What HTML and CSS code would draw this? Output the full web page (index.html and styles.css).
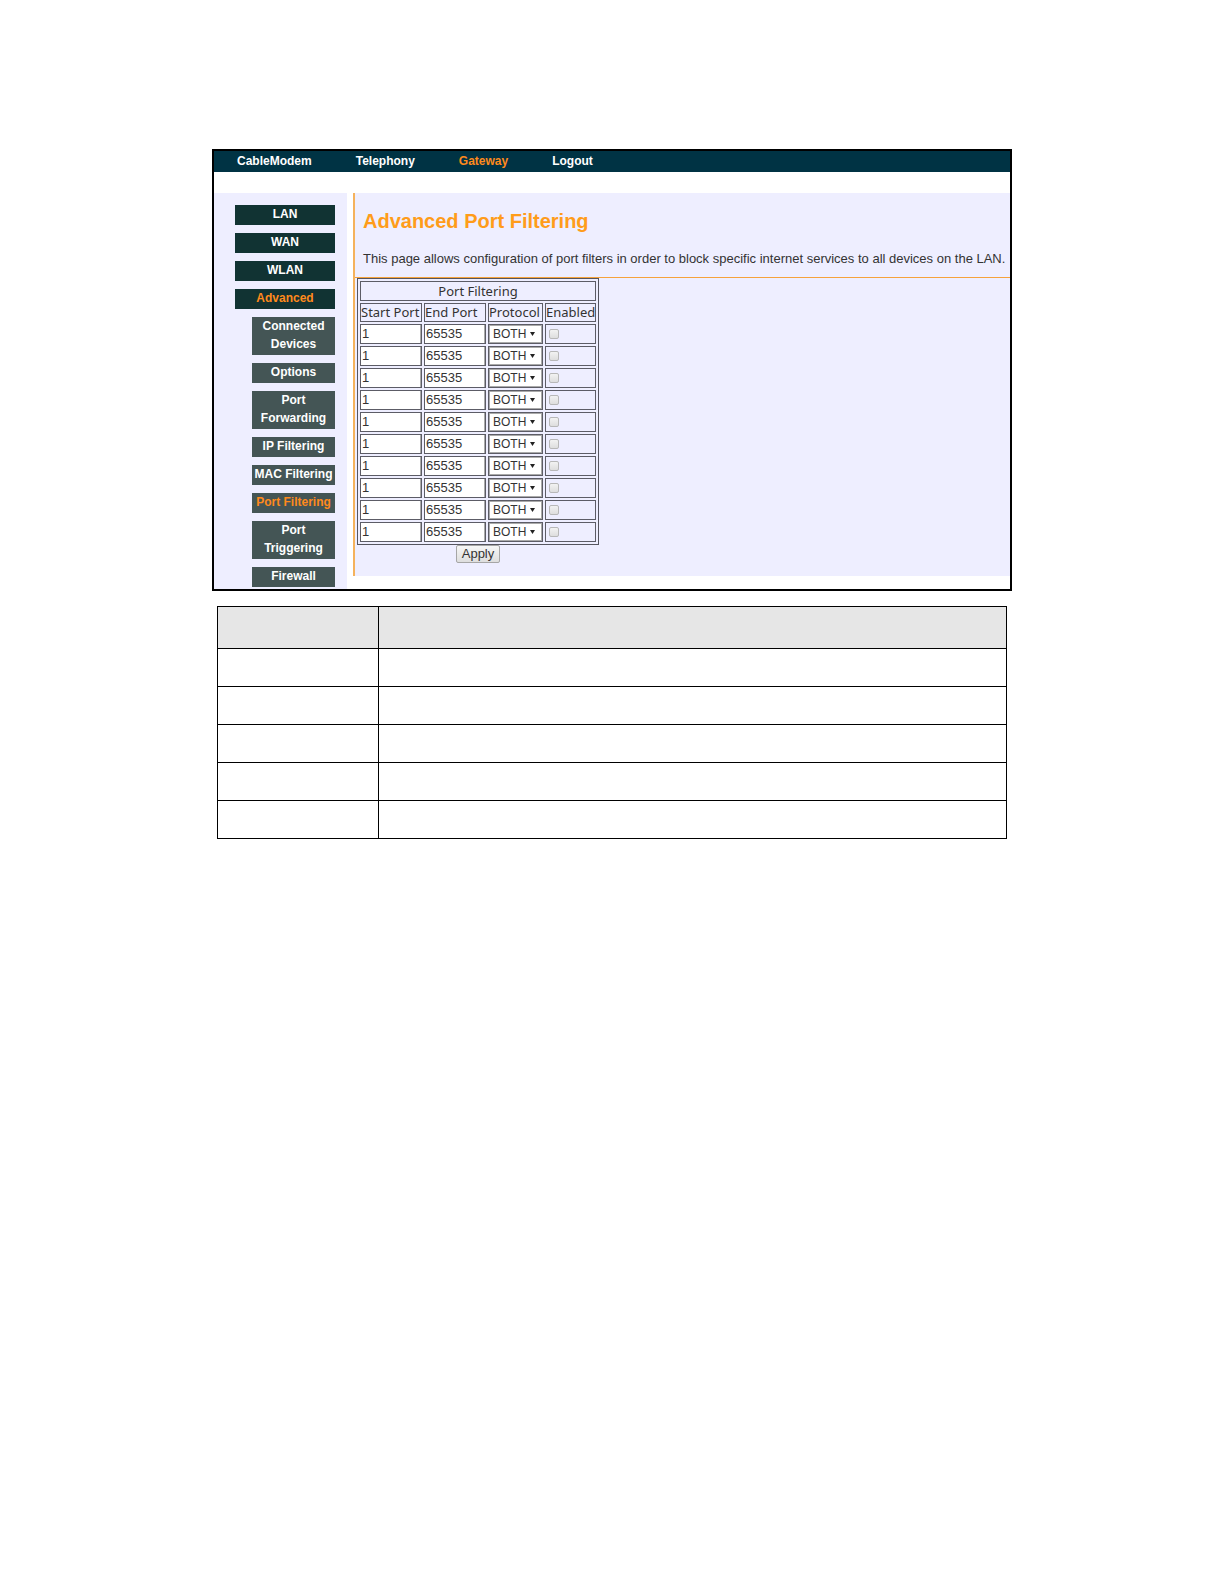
FILE: index.html
```
<!DOCTYPE html>
<html lang="en">
<head>
<meta charset="utf-8">
<meta name="viewport" content="width=device-width, initial-scale=1">
<title>Advanced Port Filtering</title>
<link rel="stylesheet" href="styles.css">
<script src="rows.js" defer></script>
</head>
<body>
<main class="page">
  <div class="console">
    <nav class="topnav" aria-label="Main">
      <a href="#">CableModem</a>
      <a href="#">Telephony</a>
      <a href="#" class="current">Gateway</a>
      <a href="#">Logout</a>
    </nav>
    <div class="workspace">
      <nav class="sidebar" aria-label="Gateway">
        <a href="#">LAN</a>
        <a href="#">WAN</a>
        <a href="#">WLAN</a>
        <a href="#" class="current">Advanced</a>
        <a href="#" class="sub">Connected Devices</a>
        <a href="#" class="sub">Options</a>
        <a href="#" class="sub">Port Forwarding</a>
        <a href="#" class="sub">IP Filtering</a>
        <a href="#" class="sub">MAC Filtering</a>
        <a href="#" class="sub current">Port Filtering</a>
        <a href="#" class="sub">Port Triggering</a>
        <a href="#" class="sub">Firewall</a>
      </nav>
      <section class="panel">
        <header class="intro">
          <h1>Advanced Port Filtering</h1>
          <p>This page allows configuration of port filters in order to block specific internet services to all devices on the LAN.</p>
        </header>
        <form class="filters">
          <table class="ports">
            <colgroup><col class="port-col"><col class="port-col"><col class="protocol-col"><col class="enabled-col"></colgroup>
            <thead>
              <tr><th colspan="4" class="title">Port Filtering</th></tr>
              <tr><th>Start Port</th><th>End Port</th><th>Protocol</th><th>Enabled</th></tr>
            </thead>
            <tbody id="rows"></tbody>
          </table>
          <button type="button" class="apply">Apply</button>
        </form>
      </section>
    </div>
  </div>
  <table class="notes">
    <colgroup><col class="label-col"><col></colgroup>
    <thead><tr><th></th><th></th></tr></thead>
    <tbody>
      <tr><td></td><td></td></tr>
      <tr><td></td><td></td></tr>
      <tr><td></td><td></td></tr>
      <tr><td></td><td></td></tr>
      <tr><td></td><td></td></tr>
    </tbody>
  </table>
</main>
</body>
</html>
```
FILE: styles.css
```
* {
  box-sizing: border-box;
}

body {
  margin: 0;
  background: #fff;
  color: #333;
  font-family: "Liberation Sans", Arial, sans-serif;
  font-size: 12px;
}

.page {
  max-width: 800px;
  margin: 0 auto;
  padding: 149px 0;
}

.console {
  border: 2px solid #000;
}

/* Top navigation */
.topnav {
  display: flex;
  gap: 44px;
  padding: 0 23px;
  background: #003344;
  line-height: 21px;
}

.topnav a,
.sidebar a {
  color: #fff;
  font-weight: bold;
  text-decoration: none;
}

.topnav .current,
.sidebar .current {
  color: #ff8a1c;
}

.workspace {
  display: flex;
  align-items: flex-start;
  gap: 6px;
  padding-top: 21px;
}

/* Side menu */
.sidebar {
  display: flex;
  flex-direction: column;
  flex: 0 0 133px;
  gap: 8px;
  padding: 12px 12px 2px 21px;
  background: #eeeeff;
  line-height: 18px;
  text-align: center;
}

.sidebar a {
  padding-bottom: 2px;
  background: #113333;
}

.sidebar .sub {
  margin-left: 17px;
  background: #445555;
}

/* Content panel */
.panel {
  flex: 1;
  min-width: 0;
  border-left: 2px solid #f5b25c;
  background: #eeeeff;
}

.intro {
  padding: 16px 0 9px 8px;
  border-bottom: 1px solid #f5a23c;
}

.intro h1 {
  margin: 0 0 17px;
  color: #ff9c1a;
  font-size: 20px;
  line-height: 24px;
}

.intro p {
  margin: 0;
  font-size: 13px;
  line-height: 18px;
}

.filters {
  display: flex;
  flex-direction: column;
  align-items: center;
  width: 242px;
  margin-left: 2px;
  padding-bottom: 13px;
}

.ports {
  width: 100%;
  table-layout: fixed;
  border: 1px solid #55555f;
  border-spacing: 2px;
}

.port-col {
  width: 62px;
}

.protocol-col {
  width: 55px;
}

.ports th,
.ports td {
  height: 20px;
  padding: 0;
  border: 1px solid #5c5c66;
}

.ports th {
  height: 19px;
  font: 13px/17px "Noto Sans", sans-serif;
  text-align: left;
  white-space: nowrap;
}

.ports .title {
  height: 20px;
  text-align: center;
}

.ports input[type="text"] {
  display: block;
  width: 100%;
  height: 18px;
  padding: 0 0 0 1px;
  border: 0 solid #aaa;
  border-right-width: 1px;
  border-radius: 0;
  background: #fff;
  color: #333;
  font: 13px/18px "Liberation Sans", Arial, sans-serif;
}

.select {
  display: block;
  position: relative;
}

.select::after {
  content: "";
  position: absolute;
  top: 7px;
  right: 7px;
  width: 5px;
  height: 4px;
  background: #222;
  clip-path: polygon(0 0, 100% 0, 50% 100%);
  pointer-events: none;
}

.select select {
  appearance: none;
  display: block;
  width: 100%;
  height: 18px;
  padding: 0 0 0 3px;
  border: 1px solid #aaa;
  border-radius: 0;
  background: #fff;
  color: #333;
  font: 12px/16px "Liberation Sans", Arial, sans-serif;
}

.ports input[type="checkbox"] {
  appearance: none;
  display: block;
  width: 10px;
  height: 10px;
  margin: 0 0 0 3px;
  border: 1px solid #b8b8b8;
  border-radius: 2px;
  background: linear-gradient(#f2f2f2, #dedede);
}

.apply {
  height: 18px;
  padding: 0 5px;
  border: 1px solid #a6a6a6;
  border-radius: 2px;
  background: linear-gradient(#f6f6f6, #dedede);
  color: #333;
  font: 13px/16px "Liberation Sans", Arial, sans-serif;
}

/* Description table */
.notes {
  width: calc(100% - 10px);
  margin: 15px 5px 0;
  table-layout: fixed;
  border-collapse: collapse;
}

.label-col {
  width: 161px;
}

.notes th,
.notes td {
  height: 38px;
  padding: 0;
  border: 1px solid #000;
}

.notes th {
  height: 42px;
  background: #e6e6e6;
}
```
FILE: rows.js
```
const body = document.getElementById("rows");
for (let n = 1; n <= 10; n++) {
  body.insertAdjacentHTML("beforeend", `
    <tr>
      <td><input type="text" value="1" aria-label="Start port ${n}"></td>
      <td><input type="text" value="65535" aria-label="End port ${n}"></td>
      <td><span class="select"><select aria-label="Protocol ${n}"><option>BOTH</option><option>TCP</option><option>UDP</option></select></span></td>
      <td><input type="checkbox" aria-label="Enable filter ${n}"></td>
    </tr>`);
}
```
